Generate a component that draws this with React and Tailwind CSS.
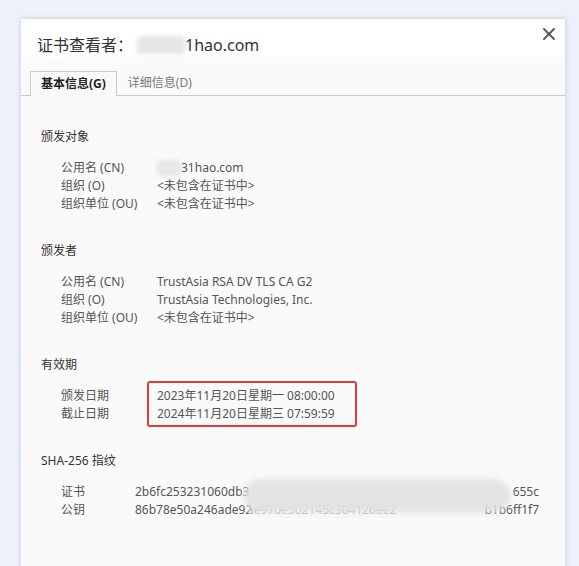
import { X } from 'lucide-react';

const font = { fontFamily: '"Noto Sans", "Noto Sans CJK SC", sans-serif' };

const Mask = ({ className }) => (
    <span className={`inline-block bg-[#e6e6e6] blur-[2px] rounded-sm ${className}`} />
);

const Section = ({ title, labelWidth, children, first }) => (
    <div className={first ? '' : 'mt-[29px]'}>
        <div className="pl-[20px] text-[12px] leading-[18px] text-[#333]">{title}</div>
        <div className={`mt-[13px] pl-[40px] grid ${labelWidth} text-[12px] leading-[18px] text-[#555]`}>
            {children}
        </div>
    </div>
);

const NA = '<未包含在证书中>';

export default function App() {
    return (
        <div className="w-[579px] h-[566px] overflow-hidden bg-[#edf1fb] pt-[19px] pl-[21px]" style={font}>
            <div className="relative w-[544px] h-[560px] bg-[#fafafa] shadow-[0_0_5px_rgba(0,0,0,0.18)]">
                {/* Header */}
                <div className="h-[38px] bg-white pt-[16px] pl-[16px]">
                    <div className="flex items-center text-[16px] leading-[20px] text-[#333]">
                        <span>证书查看者：</span>
                        <Mask className="ml-[4px] w-[48px] h-[18px]" />
                        <span>1hao.com</span>
                    </div>
                </div>
                <button className="absolute left-[518px] top-[5px] w-[20px] h-[20px] flex items-center justify-center text-[#5a5a5a]">
                    <X size={20} strokeWidth={2.4} />
                </button>

                {/* Tabs */}
                <div className="h-[39px] pt-[14px] pl-[9px] border-b border-[#c9c9c9] flex items-end">
                    <div className="h-[25px] -mb-px px-[10px] flex items-center bg-[#fafafa] border border-b-0 border-[#c9c9c9] text-[12px] font-bold text-[#222]">
                        基本信息(G)
                    </div>
                    <div className="h-[25px] px-[11px] flex items-center text-[12px] text-[#777]">
                        详细信息(D)
                    </div>
                </div>

                {/* Body */}
                <div className="pt-[32px]">
                    <Section title="颁发对象" labelWidth="grid-cols-[96px_1fr]" first>
                        <span>公用名 (CN)</span>
                        <span className="flex items-center">
                            <Mask className="w-[24px] h-[16px]" />
                            31hao.com
                        </span>
                        <span>组织 (O)</span>
                        <span>{NA}</span>
                        <span>组织单位 (OU)</span>
                        <span>{NA}</span>
                    </Section>

                    <Section title="颁发者" labelWidth="grid-cols-[96px_1fr]">
                        <span>公用名 (CN)</span>
                        <span>TrustAsia RSA DV TLS CA G2</span>
                        <span>组织 (O)</span>
                        <span>TrustAsia Technologies, Inc.</span>
                        <span>组织单位 (OU)</span>
                        <span>{NA}</span>
                    </Section>

                    <Section title="有效期" labelWidth="grid-cols-[96px_1fr]">
                        <span>颁发日期</span>
                        <span className="relative">
                            2023年11月20日星期一 08:00:00
                            <span className="absolute left-[-10px] top-[-6px] w-[210px] h-[46px] border-2 border-[#e53935] rounded-[3px]" />
                        </span>
                        <span>截止日期</span>
                        <span>2024年11月20日星期三 07:59:59</span>
                    </Section>

                    <Section title="SHA-256 指纹" labelWidth="grid-cols-[74px_404px]">
                        <span>证书</span>
                        <span className="flex justify-between">
                            <span>2b6fc253231060db3</span>
                            <span>655c</span>
                        </span>
                        <span>公钥</span>
                        <span className="relative flex justify-between">
                            <span>86b78e50a246ade92</span>
                            <span className="text-[#b5b5b5] absolute left-[112px]">ae970e502145c304126ee2</span>
                            <span>b1b6ff1f7</span>
                            <span className="absolute left-[108px] top-[-22px] w-[268px] h-[34px] bg-[#e2e2e2] blur-[3px] rounded-full opacity-90" />
                        </span>
                    </Section>
                </div>
            </div>
        </div>
    );
}
